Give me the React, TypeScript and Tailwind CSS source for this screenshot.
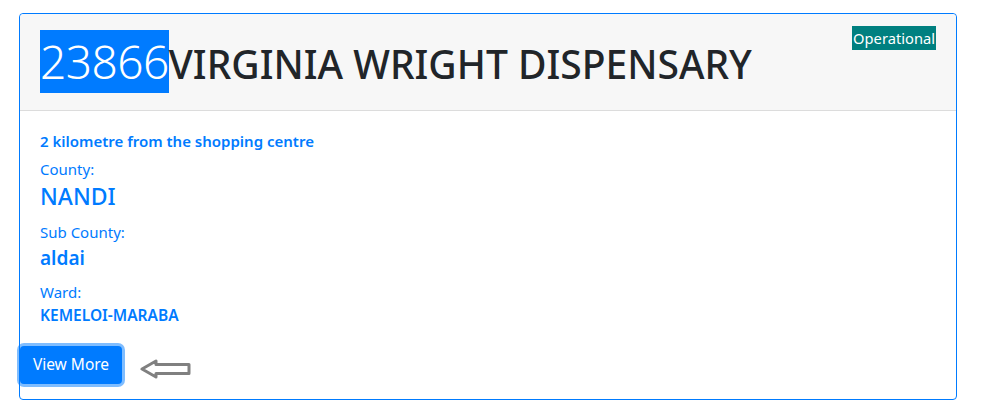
import { Fragment } from 'react';

const details = [
  { label: 'County:', labelCls: 'mt-[8px]', value: 'NANDI', cls: 'text-[23px] font-medium leading-[28px] mt-[3px]' },
  { label: 'Sub County:', labelCls: 'mt-[12px]', value: 'aldai', cls: 'text-[19px] font-semibold leading-[24px] mt-[4px]' },
  { label: 'Ward:', labelCls: 'mt-[12px]', value: 'KEMELOI-MARABA', cls: 'text-[15.5px] font-semibold leading-[18px] mt-[4px]' },
];

function LeftArrow() {
  return (
    <svg width="52" height="20" viewBox="0 0 52 20" className="ml-[18px] mt-[13px]">
      <path
        d="M2 10 L16 2 L16 5.5 L49 5.5 L49 14.5 L16 14.5 L16 18 Z"
        fill="none"
        stroke="#808080"
        strokeWidth="3"
        strokeLinejoin="round"
      />
    </svg>
  );
}

export default function App() {
  return (
    <div className="min-h-screen bg-white pt-[13px] pl-[19px] font-['Noto_Sans','Open_Sans',sans-serif]">
      <div className="w-[938px] h-[387px] border border-[#007bff] rounded-[4px] flex flex-col">
        {/* Header */}
        <div className="h-[97px] bg-[#f7f7f7] border-b border-[#dcdcdc] rounded-t-[4px] px-[20px] pt-[12px] flex justify-between items-start">
          <h1 className="mt-[4px] flex items-baseline text-[#212529]">
            <span className="bg-[#007bff] text-white text-[46px] font-light leading-[63px] tracking-[-0.5px]">23866</span>
            <span className="text-[39px] font-medium leading-[48px]">VIRGINIA WRIGHT DISPENSARY</span>
          </h1>
          <span className="bg-[#008080] text-white text-[14.7px] leading-[24px] px-[1px]">Operational</span>
        </div>

        {/* Body */}
        <div className="flex-1 flex flex-col text-[#007bff]">
          <div className="px-[20px] pt-[20px]">
            <p className="text-[15px] font-semibold leading-[20px]">2 kilometre from the shopping centre</p>
            {details.map((d) => (
              <Fragment key={d.label}>
                <p className={`${d.labelCls} text-[15px] leading-[20px]`}>{d.label}</p>
                <p className={d.cls}>{d.value}</p>
              </Fragment>
            ))}
          </div>
          <div className="flex items-start mt-[22px]">
            <button className="w-[102px] h-[38px] bg-[#007bff] text-white text-[15.5px] rounded-[4px] shadow-[0_0_0_3px_rgba(0,123,255,0.5)]">
              View More
            </button>
            <LeftArrow />
          </div>
        </div>
      </div>
    </div>
  );
}
